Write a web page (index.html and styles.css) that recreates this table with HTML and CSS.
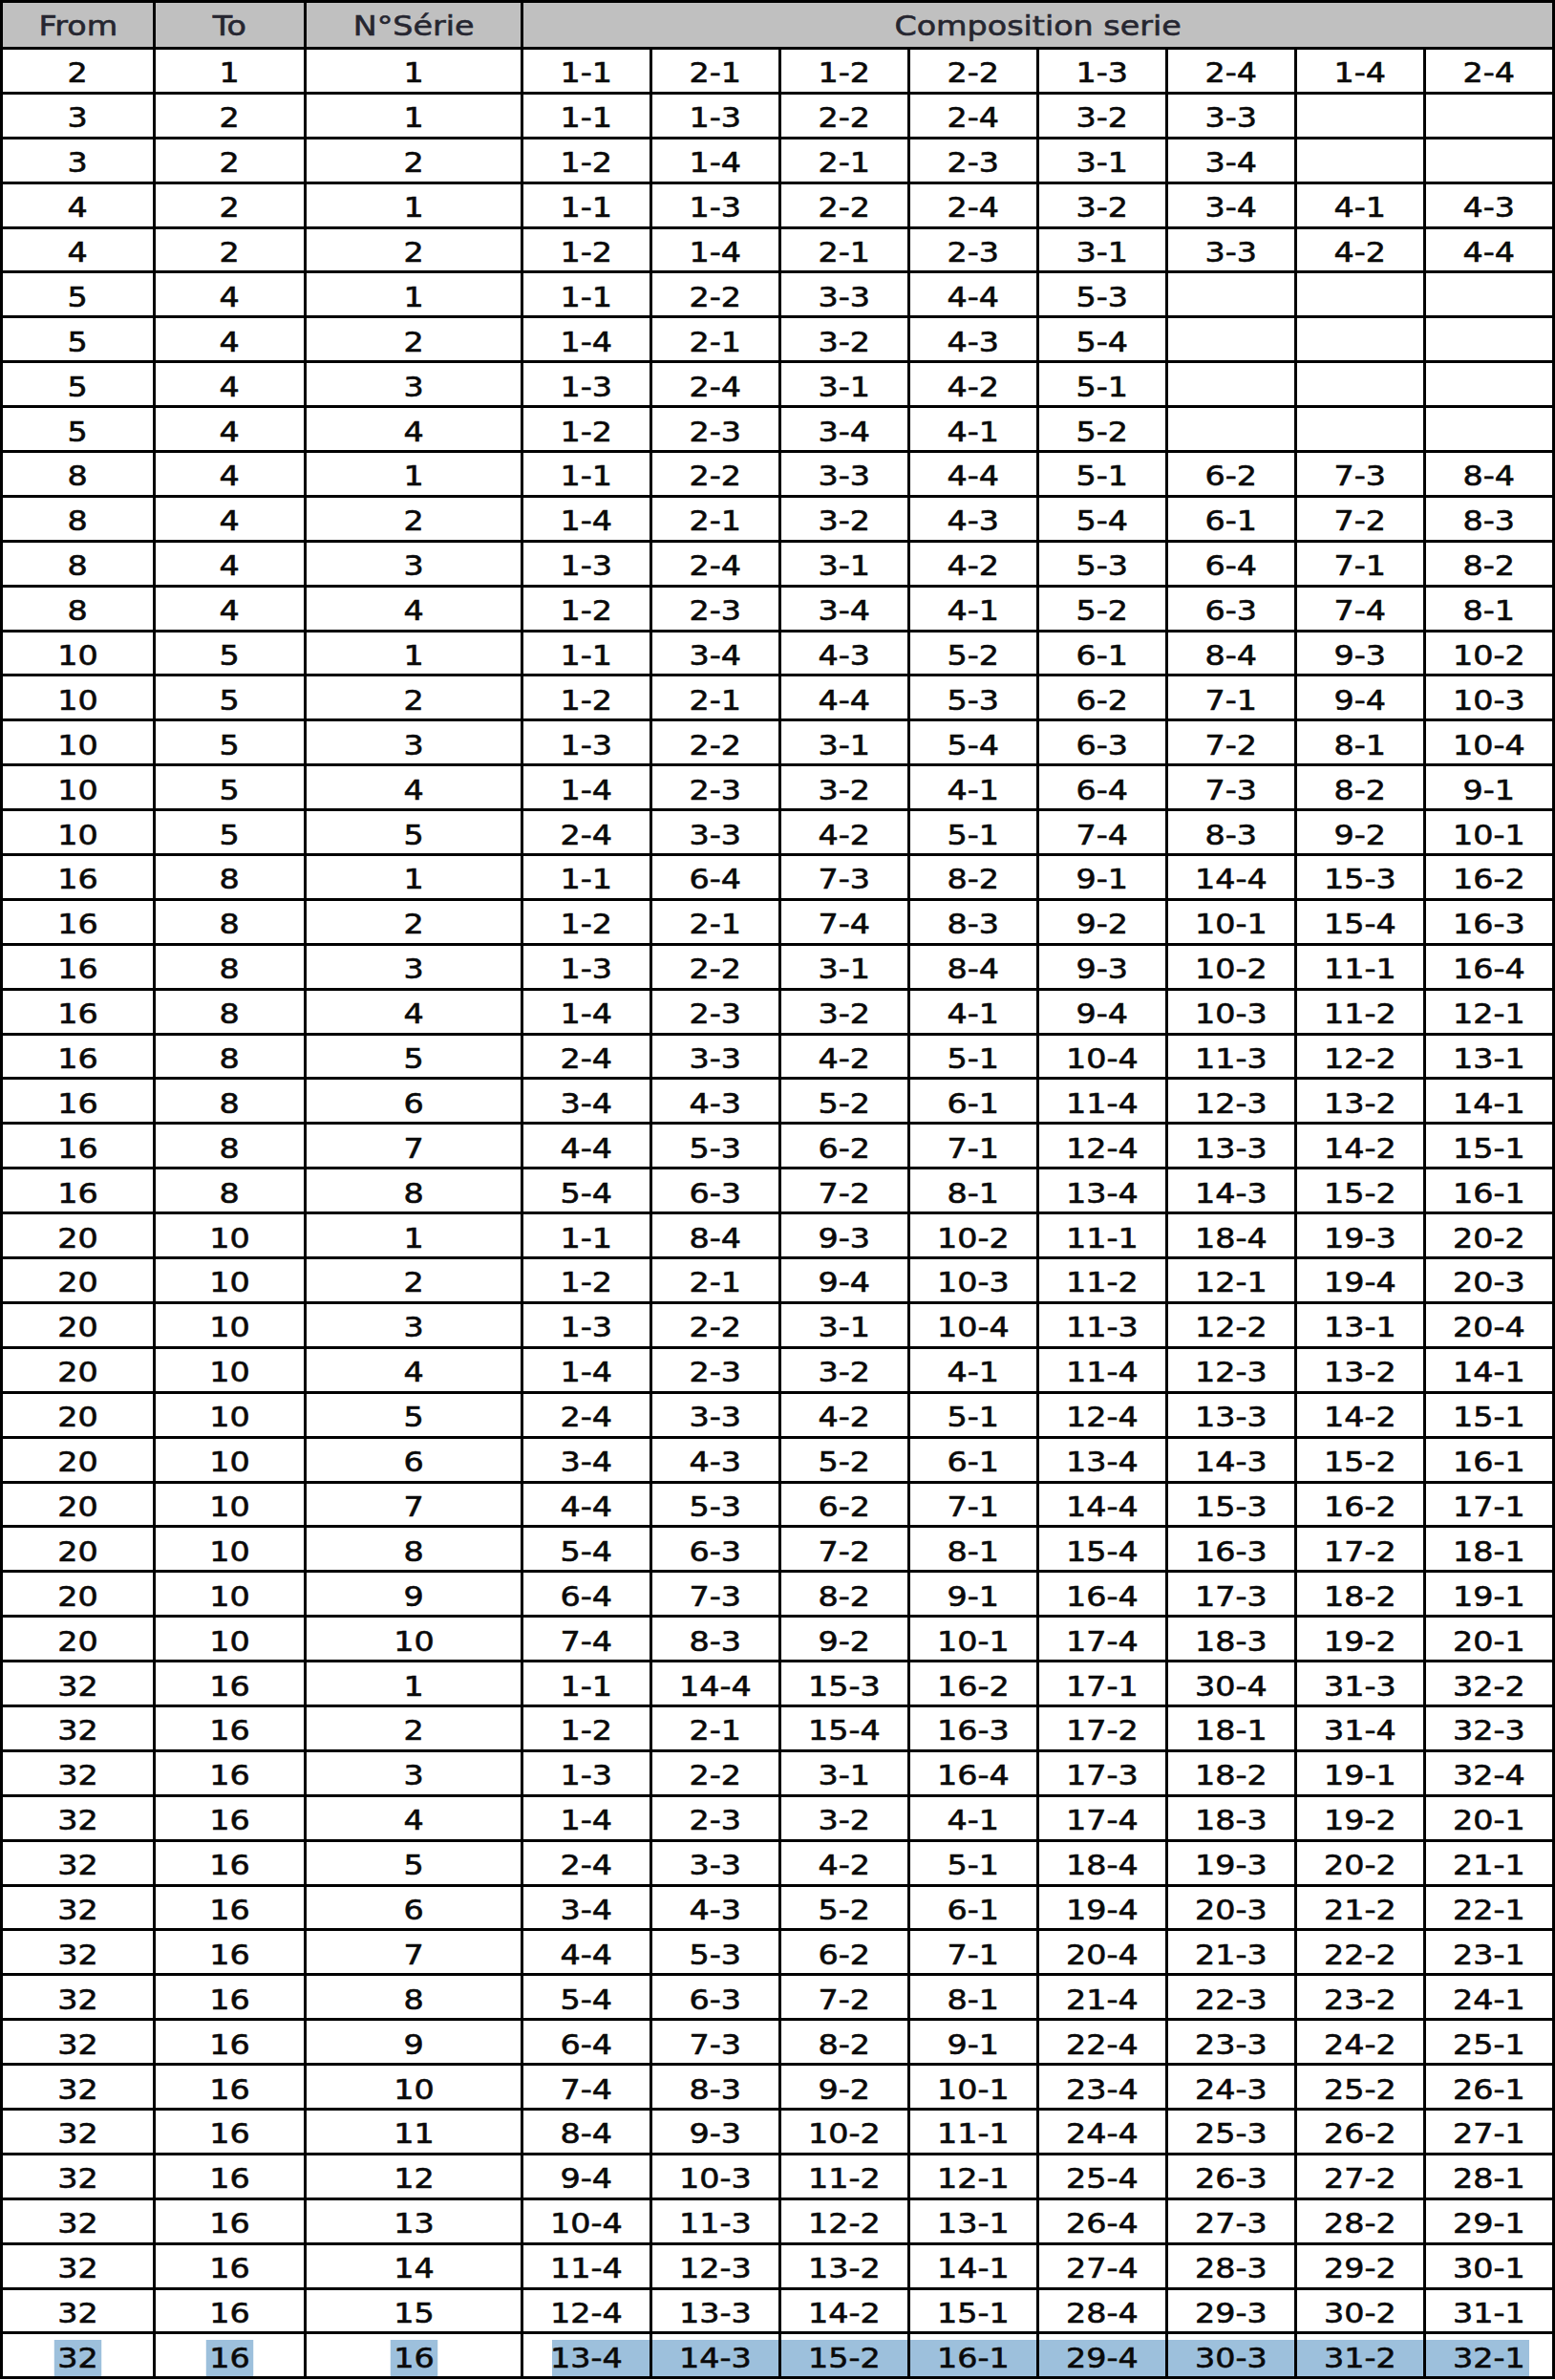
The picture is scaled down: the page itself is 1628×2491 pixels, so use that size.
FILE: index.html
```html
<!DOCTYPE html>
<html lang="fr">
<head>
<meta charset="utf-8">
<title>Composition serie</title>
<link rel="stylesheet" href="styles.css">
</head>
<body>
<div class="sheet">
<div class="h"><span>From</span></div><div class="h"><span>To</span></div><div class="h"><span>N°Série</span></div><div class="h wide"><span>Composition serie</span></div>
<div><span>2</span></div><div><span>1</span></div><div><span>1</span></div><div><span>1-1</span></div><div><span>2-1</span></div><div><span>1-2</span></div><div><span>2-2</span></div><div><span>1-3</span></div><div><span>2-4</span></div><div><span>1-4</span></div><div><span>2-4</span></div>
<div><span>3</span></div><div><span>2</span></div><div><span>1</span></div><div><span>1-1</span></div><div><span>1-3</span></div><div><span>2-2</span></div><div><span>2-4</span></div><div><span>3-2</span></div><div><span>3-3</span></div><div></div><div></div>
<div><span>3</span></div><div><span>2</span></div><div><span>2</span></div><div><span>1-2</span></div><div><span>1-4</span></div><div><span>2-1</span></div><div><span>2-3</span></div><div><span>3-1</span></div><div><span>3-4</span></div><div></div><div></div>
<div><span>4</span></div><div><span>2</span></div><div><span>1</span></div><div><span>1-1</span></div><div><span>1-3</span></div><div><span>2-2</span></div><div><span>2-4</span></div><div><span>3-2</span></div><div><span>3-4</span></div><div><span>4-1</span></div><div><span>4-3</span></div>
<div><span>4</span></div><div><span>2</span></div><div><span>2</span></div><div><span>1-2</span></div><div><span>1-4</span></div><div><span>2-1</span></div><div><span>2-3</span></div><div><span>3-1</span></div><div><span>3-3</span></div><div><span>4-2</span></div><div><span>4-4</span></div>
<div><span>5</span></div><div><span>4</span></div><div><span>1</span></div><div><span>1-1</span></div><div><span>2-2</span></div><div><span>3-3</span></div><div><span>4-4</span></div><div><span>5-3</span></div><div></div><div></div><div></div>
<div><span>5</span></div><div><span>4</span></div><div><span>2</span></div><div><span>1-4</span></div><div><span>2-1</span></div><div><span>3-2</span></div><div><span>4-3</span></div><div><span>5-4</span></div><div></div><div></div><div></div>
<div><span>5</span></div><div><span>4</span></div><div><span>3</span></div><div><span>1-3</span></div><div><span>2-4</span></div><div><span>3-1</span></div><div><span>4-2</span></div><div><span>5-1</span></div><div></div><div></div><div></div>
<div><span>5</span></div><div><span>4</span></div><div><span>4</span></div><div><span>1-2</span></div><div><span>2-3</span></div><div><span>3-4</span></div><div><span>4-1</span></div><div><span>5-2</span></div><div></div><div></div><div></div>
<div><span>8</span></div><div><span>4</span></div><div><span>1</span></div><div><span>1-1</span></div><div><span>2-2</span></div><div><span>3-3</span></div><div><span>4-4</span></div><div><span>5-1</span></div><div><span>6-2</span></div><div><span>7-3</span></div><div><span>8-4</span></div>
<div><span>8</span></div><div><span>4</span></div><div><span>2</span></div><div><span>1-4</span></div><div><span>2-1</span></div><div><span>3-2</span></div><div><span>4-3</span></div><div><span>5-4</span></div><div><span>6-1</span></div><div><span>7-2</span></div><div><span>8-3</span></div>
<div><span>8</span></div><div><span>4</span></div><div><span>3</span></div><div><span>1-3</span></div><div><span>2-4</span></div><div><span>3-1</span></div><div><span>4-2</span></div><div><span>5-3</span></div><div><span>6-4</span></div><div><span>7-1</span></div><div><span>8-2</span></div>
<div><span>8</span></div><div><span>4</span></div><div><span>4</span></div><div><span>1-2</span></div><div><span>2-3</span></div><div><span>3-4</span></div><div><span>4-1</span></div><div><span>5-2</span></div><div><span>6-3</span></div><div><span>7-4</span></div><div><span>8-1</span></div>
<div><span>10</span></div><div><span>5</span></div><div><span>1</span></div><div><span>1-1</span></div><div><span>3-4</span></div><div><span>4-3</span></div><div><span>5-2</span></div><div><span>6-1</span></div><div><span>8-4</span></div><div><span>9-3</span></div><div><span>10-2</span></div>
<div><span>10</span></div><div><span>5</span></div><div><span>2</span></div><div><span>1-2</span></div><div><span>2-1</span></div><div><span>4-4</span></div><div><span>5-3</span></div><div><span>6-2</span></div><div><span>7-1</span></div><div><span>9-4</span></div><div><span>10-3</span></div>
<div><span>10</span></div><div><span>5</span></div><div><span>3</span></div><div><span>1-3</span></div><div><span>2-2</span></div><div><span>3-1</span></div><div><span>5-4</span></div><div><span>6-3</span></div><div><span>7-2</span></div><div><span>8-1</span></div><div><span>10-4</span></div>
<div><span>10</span></div><div><span>5</span></div><div><span>4</span></div><div><span>1-4</span></div><div><span>2-3</span></div><div><span>3-2</span></div><div><span>4-1</span></div><div><span>6-4</span></div><div><span>7-3</span></div><div><span>8-2</span></div><div><span>9-1</span></div>
<div><span>10</span></div><div><span>5</span></div><div><span>5</span></div><div><span>2-4</span></div><div><span>3-3</span></div><div><span>4-2</span></div><div><span>5-1</span></div><div><span>7-4</span></div><div><span>8-3</span></div><div><span>9-2</span></div><div><span>10-1</span></div>
<div><span>16</span></div><div><span>8</span></div><div><span>1</span></div><div><span>1-1</span></div><div><span>6-4</span></div><div><span>7-3</span></div><div><span>8-2</span></div><div><span>9-1</span></div><div><span>14-4</span></div><div><span>15-3</span></div><div><span>16-2</span></div>
<div><span>16</span></div><div><span>8</span></div><div><span>2</span></div><div><span>1-2</span></div><div><span>2-1</span></div><div><span>7-4</span></div><div><span>8-3</span></div><div><span>9-2</span></div><div><span>10-1</span></div><div><span>15-4</span></div><div><span>16-3</span></div>
<div><span>16</span></div><div><span>8</span></div><div><span>3</span></div><div><span>1-3</span></div><div><span>2-2</span></div><div><span>3-1</span></div><div><span>8-4</span></div><div><span>9-3</span></div><div><span>10-2</span></div><div><span>11-1</span></div><div><span>16-4</span></div>
<div><span>16</span></div><div><span>8</span></div><div><span>4</span></div><div><span>1-4</span></div><div><span>2-3</span></div><div><span>3-2</span></div><div><span>4-1</span></div><div><span>9-4</span></div><div><span>10-3</span></div><div><span>11-2</span></div><div><span>12-1</span></div>
<div><span>16</span></div><div><span>8</span></div><div><span>5</span></div><div><span>2-4</span></div><div><span>3-3</span></div><div><span>4-2</span></div><div><span>5-1</span></div><div><span>10-4</span></div><div><span>11-3</span></div><div><span>12-2</span></div><div><span>13-1</span></div>
<div><span>16</span></div><div><span>8</span></div><div><span>6</span></div><div><span>3-4</span></div><div><span>4-3</span></div><div><span>5-2</span></div><div><span>6-1</span></div><div><span>11-4</span></div><div><span>12-3</span></div><div><span>13-2</span></div><div><span>14-1</span></div>
<div><span>16</span></div><div><span>8</span></div><div><span>7</span></div><div><span>4-4</span></div><div><span>5-3</span></div><div><span>6-2</span></div><div><span>7-1</span></div><div><span>12-4</span></div><div><span>13-3</span></div><div><span>14-2</span></div><div><span>15-1</span></div>
<div><span>16</span></div><div><span>8</span></div><div><span>8</span></div><div><span>5-4</span></div><div><span>6-3</span></div><div><span>7-2</span></div><div><span>8-1</span></div><div><span>13-4</span></div><div><span>14-3</span></div><div><span>15-2</span></div><div><span>16-1</span></div>
<div><span>20</span></div><div><span>10</span></div><div><span>1</span></div><div><span>1-1</span></div><div><span>8-4</span></div><div><span>9-3</span></div><div><span>10-2</span></div><div><span>11-1</span></div><div><span>18-4</span></div><div><span>19-3</span></div><div><span>20-2</span></div>
<div><span>20</span></div><div><span>10</span></div><div><span>2</span></div><div><span>1-2</span></div><div><span>2-1</span></div><div><span>9-4</span></div><div><span>10-3</span></div><div><span>11-2</span></div><div><span>12-1</span></div><div><span>19-4</span></div><div><span>20-3</span></div>
<div><span>20</span></div><div><span>10</span></div><div><span>3</span></div><div><span>1-3</span></div><div><span>2-2</span></div><div><span>3-1</span></div><div><span>10-4</span></div><div><span>11-3</span></div><div><span>12-2</span></div><div><span>13-1</span></div><div><span>20-4</span></div>
<div><span>20</span></div><div><span>10</span></div><div><span>4</span></div><div><span>1-4</span></div><div><span>2-3</span></div><div><span>3-2</span></div><div><span>4-1</span></div><div><span>11-4</span></div><div><span>12-3</span></div><div><span>13-2</span></div><div><span>14-1</span></div>
<div><span>20</span></div><div><span>10</span></div><div><span>5</span></div><div><span>2-4</span></div><div><span>3-3</span></div><div><span>4-2</span></div><div><span>5-1</span></div><div><span>12-4</span></div><div><span>13-3</span></div><div><span>14-2</span></div><div><span>15-1</span></div>
<div><span>20</span></div><div><span>10</span></div><div><span>6</span></div><div><span>3-4</span></div><div><span>4-3</span></div><div><span>5-2</span></div><div><span>6-1</span></div><div><span>13-4</span></div><div><span>14-3</span></div><div><span>15-2</span></div><div><span>16-1</span></div>
<div><span>20</span></div><div><span>10</span></div><div><span>7</span></div><div><span>4-4</span></div><div><span>5-3</span></div><div><span>6-2</span></div><div><span>7-1</span></div><div><span>14-4</span></div><div><span>15-3</span></div><div><span>16-2</span></div><div><span>17-1</span></div>
<div><span>20</span></div><div><span>10</span></div><div><span>8</span></div><div><span>5-4</span></div><div><span>6-3</span></div><div><span>7-2</span></div><div><span>8-1</span></div><div><span>15-4</span></div><div><span>16-3</span></div><div><span>17-2</span></div><div><span>18-1</span></div>
<div><span>20</span></div><div><span>10</span></div><div><span>9</span></div><div><span>6-4</span></div><div><span>7-3</span></div><div><span>8-2</span></div><div><span>9-1</span></div><div><span>16-4</span></div><div><span>17-3</span></div><div><span>18-2</span></div><div><span>19-1</span></div>
<div><span>20</span></div><div><span>10</span></div><div><span>10</span></div><div><span>7-4</span></div><div><span>8-3</span></div><div><span>9-2</span></div><div><span>10-1</span></div><div><span>17-4</span></div><div><span>18-3</span></div><div><span>19-2</span></div><div><span>20-1</span></div>
<div><span>32</span></div><div><span>16</span></div><div><span>1</span></div><div><span>1-1</span></div><div><span>14-4</span></div><div><span>15-3</span></div><div><span>16-2</span></div><div><span>17-1</span></div><div><span>30-4</span></div><div><span>31-3</span></div><div><span>32-2</span></div>
<div><span>32</span></div><div><span>16</span></div><div><span>2</span></div><div><span>1-2</span></div><div><span>2-1</span></div><div><span>15-4</span></div><div><span>16-3</span></div><div><span>17-2</span></div><div><span>18-1</span></div><div><span>31-4</span></div><div><span>32-3</span></div>
<div><span>32</span></div><div><span>16</span></div><div><span>3</span></div><div><span>1-3</span></div><div><span>2-2</span></div><div><span>3-1</span></div><div><span>16-4</span></div><div><span>17-3</span></div><div><span>18-2</span></div><div><span>19-1</span></div><div><span>32-4</span></div>
<div><span>32</span></div><div><span>16</span></div><div><span>4</span></div><div><span>1-4</span></div><div><span>2-3</span></div><div><span>3-2</span></div><div><span>4-1</span></div><div><span>17-4</span></div><div><span>18-3</span></div><div><span>19-2</span></div><div><span>20-1</span></div>
<div><span>32</span></div><div><span>16</span></div><div><span>5</span></div><div><span>2-4</span></div><div><span>3-3</span></div><div><span>4-2</span></div><div><span>5-1</span></div><div><span>18-4</span></div><div><span>19-3</span></div><div><span>20-2</span></div><div><span>21-1</span></div>
<div><span>32</span></div><div><span>16</span></div><div><span>6</span></div><div><span>3-4</span></div><div><span>4-3</span></div><div><span>5-2</span></div><div><span>6-1</span></div><div><span>19-4</span></div><div><span>20-3</span></div><div><span>21-2</span></div><div><span>22-1</span></div>
<div><span>32</span></div><div><span>16</span></div><div><span>7</span></div><div><span>4-4</span></div><div><span>5-3</span></div><div><span>6-2</span></div><div><span>7-1</span></div><div><span>20-4</span></div><div><span>21-3</span></div><div><span>22-2</span></div><div><span>23-1</span></div>
<div><span>32</span></div><div><span>16</span></div><div><span>8</span></div><div><span>5-4</span></div><div><span>6-3</span></div><div><span>7-2</span></div><div><span>8-1</span></div><div><span>21-4</span></div><div><span>22-3</span></div><div><span>23-2</span></div><div><span>24-1</span></div>
<div><span>32</span></div><div><span>16</span></div><div><span>9</span></div><div><span>6-4</span></div><div><span>7-3</span></div><div><span>8-2</span></div><div><span>9-1</span></div><div><span>22-4</span></div><div><span>23-3</span></div><div><span>24-2</span></div><div><span>25-1</span></div>
<div><span>32</span></div><div><span>16</span></div><div><span>10</span></div><div><span>7-4</span></div><div><span>8-3</span></div><div><span>9-2</span></div><div><span>10-1</span></div><div><span>23-4</span></div><div><span>24-3</span></div><div><span>25-2</span></div><div><span>26-1</span></div>
<div><span>32</span></div><div><span>16</span></div><div><span>11</span></div><div><span>8-4</span></div><div><span>9-3</span></div><div><span>10-2</span></div><div><span>11-1</span></div><div><span>24-4</span></div><div><span>25-3</span></div><div><span>26-2</span></div><div><span>27-1</span></div>
<div><span>32</span></div><div><span>16</span></div><div><span>12</span></div><div><span>9-4</span></div><div><span>10-3</span></div><div><span>11-2</span></div><div><span>12-1</span></div><div><span>25-4</span></div><div><span>26-3</span></div><div><span>27-2</span></div><div><span>28-1</span></div>
<div><span>32</span></div><div><span>16</span></div><div><span>13</span></div><div><span>10-4</span></div><div><span>11-3</span></div><div><span>12-2</span></div><div><span>13-1</span></div><div><span>26-4</span></div><div><span>27-3</span></div><div><span>28-2</span></div><div><span>29-1</span></div>
<div><span>32</span></div><div><span>16</span></div><div><span>14</span></div><div><span>11-4</span></div><div><span>12-3</span></div><div><span>13-2</span></div><div><span>14-1</span></div><div><span>27-4</span></div><div><span>28-3</span></div><div><span>29-2</span></div><div><span>30-1</span></div>
<div><span>32</span></div><div><span>16</span></div><div><span>15</span></div><div><span>12-4</span></div><div><span>13-3</span></div><div><span>14-2</span></div><div><span>15-1</span></div><div><span>28-4</span></div><div><span>29-3</span></div><div><span>30-2</span></div><div><span>31-1</span></div>
<div><span class="hl">32</span></div><div><span class="hl">16</span></div><div><span class="hl">16</span></div><div class="band band-first"><span>13-4</span></div><div class="band"><span>14-3</span></div><div class="band"><span>15-2</span></div><div class="band"><span>16-1</span></div><div class="band"><span>29-4</span></div><div class="band"><span>30-3</span></div><div class="band"><span>31-2</span></div><div class="band band-last"><span>32-1</span></div>
</div>
</body>
</html>
```

FILE: styles.css
```css
html, body {
  margin: 0;
  padding: 0;
  background: #fff;
}

.sheet {
  width: 1628px;
  box-sizing: border-box;
  display: grid;
  grid-template-columns: 157px 155px 224px repeat(8, 1fr);
  grid-template-rows: 46px;
  grid-auto-rows: 43.9px;
  gap: 3px;
  padding: 3px;
  background: #000;
  font-family: "DejaVu Sans", "Liberation Sans", sans-serif;
  font-size: 29px;
  color: #0a0a0a;
}

.sheet > div {
  background: #fff;
  display: flex;
  align-items: center;
  justify-content: center;
  padding-top: 5px;
  box-sizing: border-box;
  overflow: hidden;
  white-space: nowrap;
}

.sheet span {
  display: inline-block;
  line-height: 34px;
  transform: scaleX(1.15);
  -webkit-text-stroke: 0.6px currentColor;
}

.sheet > .h {
  background: #c0c0c0;
  color: #262630;
  padding-top: 2px;
}

.sheet > .wide {
  grid-column: span 8;
}

.sheet .hl {
  background: #9dc0dc;
  padding: 2px 3px;
}

.sheet > .band {
  background: linear-gradient(#fff 6px, #9dc0dc 6px);
}

.sheet > .band-first {
  background:
    linear-gradient(to right, #fff 30px, transparent 30px),
    linear-gradient(#fff 6px, #9dc0dc 6px);
}

.sheet > .band-last {
  background:
    linear-gradient(to left, #fff 24px, transparent 24px),
    linear-gradient(#fff 6px, #9dc0dc 6px);
}
```
